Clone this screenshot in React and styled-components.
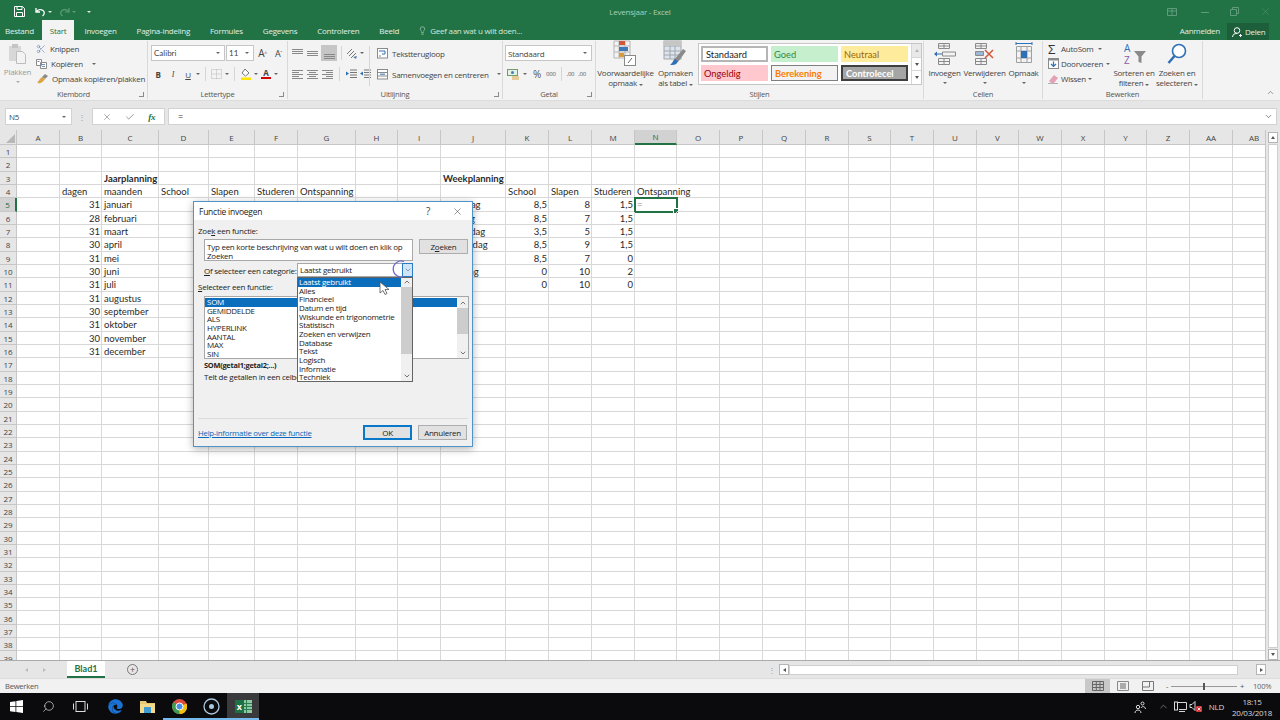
import React from "react";
import styled, { createGlobalStyle } from "styled-components";
import { FaEdge } from "react-icons/fa";
import { Check, ChevronDown, ChevronUp, Lightbulb, Scissors, Search, X } from "lucide-react";

const UI = '"Open Sans", "Noto Sans", sans-serif';
const CELL = 'Lato, "Open Sans", sans-serif';

const Global = createGlobalStyle`
  html, body { margin: 0; padding: 0; background: #fff; }
  #root { width: 1280px; height: 720px; overflow: hidden; }
  * { box-sizing: border-box; }
`;

const Page = styled.div`
  position: relative;
  width: 1280px;
  height: 720px;
  display: flex;
  flex-direction: column;
  overflow: hidden;
  font-family: ${UI};
  font-size: 8px;
  letter-spacing: -0.25px;
  white-space: nowrap;
  color: #444;
`;

/* title bar */
const TitleBar = styled.div`
  height: 20px;
  background: #217346;
  display: grid;
  grid-template-columns: 1fr auto 1fr;
  align-items: center;
  padding-top: 3px;
  color: #a9cfb9;
`;
const Quick = styled.div`
  display: flex;
  align-items: center;
  gap: 5px;
  padding-left: 14px;
  color: #e4efe8;
`;
const WindowButtons = styled.div`
  display: flex;
  justify-content: flex-end;
  align-items: center;
  padding-right: 9px;
  color: #5f9c7c;
`;
const WindowButton = styled.span`
  display: flex;
  margin-right: ${(p) => p.$mr || 0}px;
`;
const DocTitle = styled.div`
  font-size: 8px;
`;

/* tabs */
const TabRow = styled.div`
  height: 20px;
  background: #217346;
  display: flex;
  align-items: stretch;
  color: #e3efe8;
`;
const Tab = styled.div`
  display: flex;
  align-items: center;
  padding: 1px 10px 0;
  background: transparent;
  color: inherit;
`;
const FileTab = styled(Tab)`
  padding: 1px 8px 0 5px;
`;
const ActiveTab = styled(Tab)`
  padding: 1px 8px 0;
  background: #f3f3f3;
  color: #217346;
`;
const TellMe = styled.div`
  display: flex;
  align-items: center;
  gap: 3px;
  padding: 1px 0 0 9px;
  color: #d6e8dd;
`;
const TabSpacer = styled.div`
  flex: 1;
`;
const SignIn = styled.div`
  display: flex;
  align-items: center;
  padding-top: 1px;
  margin-right: 7px;
`;
const ShareBox = styled.div`
  display: flex;
  align-items: center;
  gap: 3px;
  width: 42px;
  margin: 3px 11px 0 0;
  padding-left: 5px;
  background: #1c5f3a;
`;

/* ribbon */
const Ribbon = styled.div`
  position: relative;
  height: 61px;
  background: #f3f3f3;
  display: flex;
  border-bottom: 1px solid #dcdcdc;
`;
const Group = styled.div`
  width: ${(p) => p.$w}px;
  display: flex;
  flex-direction: column;
  border-right: 1px solid #d9d9d9;
  margin: 1px 0;
  position: relative;
`;
const GroupBody = styled.div`
  flex: 1;
  display: flex;
  padding-left: ${(p) => p.$pl || 0}px;
  gap: ${(p) => p.$gap || 0}px;
  min-height: 0;
`;
const GroupLabel = styled.div`
  height: 11px;
  text-align: center;
  line-height: 12px;
  color: #555;
  font-size: 7.6px;
`;
const Launcher = styled.span`
  position: absolute;
  right: 3px;
  bottom: 2px;
  width: 5px;
  height: 5px;
  border-left: 1px solid #8a8a8a;
  border-bottom: 1px solid #8a8a8a;
  transform: scaleX(-1);
`;
const Column = styled.div`
  display: flex;
  flex-direction: column;
  align-items: ${(p) => p.$align || "stretch"};
  gap: ${(p) => p.$gap || 0}px;
  width: ${(p) => (p.$w ? `${p.$w}px` : "auto")};
  padding-left: ${(p) => p.$pl || 0}px;
`;
const Row = styled.div`
  display: flex;
  align-items: center;
  gap: ${(p) => p.$gap ?? 4}px;
  height: ${(p) => p.$h || 15}px;
  margin-top: ${(p) => p.$mt || 0}px;
  margin-left: ${(p) => p.$ml || 0}px;
  padding-left: ${(p) => p.$pl || 0}px;
`;
const Caret = styled.span`
  display: inline-block;
  width: 0;
  height: 0;
  flex: none;
  border-left: 2px solid transparent;
  border-right: 2px solid transparent;
  border-top: 2px solid ${(p) => p.$c || "#666"};
  margin-left: ${(p) => p.$ml || 0}px;
  margin-top: ${(p) => p.$mt || 0}px;
`;
const Muted = styled.span`
  color: #9a9a9a;
`;
const BigButton = styled.div`
  width: ${(p) => p.$w}px;
  margin-left: ${(p) => p.$ml || 0}px;
  display: flex;
  flex-direction: column;
  align-items: center;
  line-height: 10px;
  text-align: center;
`;
const BigIcon = styled.div`
  height: ${(p) => p.$h || 26}px;
  display: flex;
  align-items: center;
  justify-content: center;
  margin-bottom: 1px;
`;
const Select = styled.div`
  width: ${(p) => p.$w}px;
  height: 16px;
  background: #fff;
  border: 1px solid #c6c6c6;
  display: flex;
  align-items: center;
  justify-content: space-between;
  padding: 0 4px 0 2px;
  font-size: 8px;
  color: #444;
`;
const FontSelect = styled(Select)`
  font-family: ${CELL};
  letter-spacing: 0;
`;
const GlyphButton = styled.span`
  width: ${(p) => p.$w || 14}px;
  height: 16px;
  flex: none;
  display: flex;
  align-items: center;
  justify-content: center;
  color: #444;
  font-family: ${(p) => (p.$serif ? '"Liberation Serif", serif' : UI)};
  font-weight: ${(p) => (p.$bold ? 700 : 400)};
  font-style: ${(p) => (p.$italic ? "italic" : "normal")};
  text-decoration: ${(p) => (p.$under ? "underline" : "none")};
  background: ${(p) => (p.$on ? "#c6c6c6" : "transparent")};
  font-size: ${(p) => p.$size || 8}px;
`;
const Tiny = styled.sup`
  font-size: 5px;
`;
const RibbonSep = styled.span`
  width: 1px;
  height: ${(p) => p.$h || 14}px;
  background: #d6d6d6;
  flex: none;
  margin: ${(p) => p.$mt || 0}px ${(p) => p.$m ?? 3}px 0;
`;
const ColorBar = styled.span`
  display: flex;
  flex-direction: column;
  align-items: center;
  line-height: 8px;
  font-weight: 700;
  color: #444;
  &::after {
    content: "";
    width: 10px;
    height: 2px;
    background: ${(p) => p.$c};
  }
`;
const Gallery = styled.div`
  width: 224px;
  height: 42px;
  margin: 2px 0 0 2px;
  background: #fff;
  border: 1px solid #c6c6c6;
  display: flex;
`;
const StyleGrid = styled.div`
  flex: 1;
  display: grid;
  grid-template-columns: repeat(3, 67px);
  grid-template-rows: repeat(2, 16px);
  gap: 3px;
  padding: 2px 0 0 2px;
`;
const StyleCell = styled.div`
  display: flex;
  align-items: center;
  padding-left: 3px;
  font-family: ${CELL};
  font-size: 9.3px;
  letter-spacing: 0;
  background: ${(p) => p.$bg};
  color: ${(p) => p.$c};
  font-weight: ${(p) => (p.$bold ? 700 : 400)};
  border: ${(p) => p.$border || "none"};
  overflow: hidden;
`;
const GalleryScroll = styled.div`
  width: 10px;
  display: flex;
  flex-direction: column;
  border-left: 1px solid #d6d6d6;
`;
const GalleryButton = styled.div`
  flex: 1;
  display: flex;
  align-items: center;
  justify-content: center;
  background: ${(p) => (p.$off ? "#e9e9e9" : "#fff")};
  border-bottom: 1px solid #d6d6d6;
  &:last-child {
    border-bottom: none;
  }
`;
const Collapse = styled.div`
  position: absolute;
  right: 5px;
  bottom: 1px;
  color: #555;
`;
const SumSign = styled.span`
  width: 12px;
  font-size: 13px;
  line-height: 12px;
  color: #333;
`;
const Ghost = styled.span`
  font-size: ${(p) => p.$s || 7}px;
  margin-left: ${(p) => p.$ml || 0}px;
  color: #555;
`;

/* formula bar */
const FormulaBar = styled.div`
  height: 29px;
  background: #e6e6e6;
  display: flex;
  padding: 7px 3px 5px 5px;
  gap: 3px;
`;
const NameBox = styled.div`
  width: 67px;
  background: #fff;
  border: 1px solid #d2d2d2;
  display: flex;
  align-items: center;
  justify-content: space-between;
  padding: 0 5px 0 3px;
  font-size: 8px;
`;
const Dots = styled.div`
  width: 10px;
  margin: 0 2px;
  display: flex;
  align-items: center;
  justify-content: center;
  color: #9a9a9a;
`;
const FormulaButtons = styled.div`
  width: 73px;
  background: #fff;
  border: 1px solid #d2d2d2;
  display: flex;
  align-items: center;
  justify-content: space-around;
  padding: 0 2px;
  color: #666;
`;
const Fx = styled.span`
  font-family: "Liberation Serif", serif;
  font-style: italic;
  font-size: 9px;
  font-weight: 700;
  color: #217346;
`;
const FormulaInput = styled.div`
  flex: 1;
  background: #fff;
  border: 1px solid #d2d2d2;
  display: flex;
  align-items: center;
  justify-content: space-between;
  padding: 0 3px 0 9px;
  font-family: ${CELL};
  font-size: 9px;
  color: #333;
`;

/* sheet */
const SheetRow = styled.div`
  flex: 1;
  min-height: 0;
  display: flex;
  background: #e6e6e6;
`;
const SheetGrid = styled.div`
  width: 1266px;
  flex: none;
  overflow: hidden;
  display: grid;
  align-content: start;
  background: #fff;
  border-right: 1px solid #c6c6c6;
  grid-template-columns: ${(p) => p.$columns};
  grid-template-rows: 15px repeat(39, 13.333px);
  font-family: ${CELL};
  font-size: 9.5px;
  letter-spacing: 0;
  color: #2a2a2a;
`;
const Corner = styled.div`
  background: #e6e6e6;
  border-right: 1px solid #c6c6c6;
  border-bottom: 1px solid #c6c6c6;
  position: relative;
  &::after {
    content: "";
    position: absolute;
    right: 1px;
    bottom: 1px;
    border-left: 9px solid transparent;
    border-bottom: 9px solid #b8b8b8;
  }
`;
const ColumnHead = styled.div`
  display: flex;
  align-items: center;
  justify-content: center;
  background: ${(p) => (p.$active ? "#d2d2d2" : "#e6e6e6")};
  border-right: 1px solid #c6c6c6;
  border-bottom: ${(p) => (p.$active ? "2px solid #217346" : "1px solid #c6c6c6")};
  color: ${(p) => (p.$active ? "#1f6b41" : "#444")};
  font-family: ${UI};
  font-size: 8px;
`;
const RowHead = styled.div`
  display: flex;
  align-items: center;
  justify-content: center;
  padding-top: 1px;
  background: ${(p) => (p.$active ? "#d2d2d2" : "#e6e6e6")};
  border-right: ${(p) => (p.$active ? "2px solid #217346" : "1px solid #c6c6c6")};
  border-bottom: 1px solid #c6c6c6;
  color: ${(p) => (p.$active ? "#1f6b41" : "#444")};
  font-family: ${UI};
  font-size: 8px;
`;
const Cell = styled.div`
  position: relative;
  grid-column: ${(p) => (p.$span ? `span ${p.$span}` : "auto")};
  border-right: 1px solid #d8d8d8;
  border-bottom: 1px solid #d8d8d8;
  display: flex;
  align-items: center;
  justify-content: ${(p) => (p.$right ? "flex-end" : "flex-start")};
  padding: 1px 1px 0 2px;
  font-weight: ${(p) => (p.$bold ? 700 : 400)};
`;
const ActiveCell = styled(Cell)`
  outline: 2px solid #217346;
  outline-offset: -1px;
  color: #8a8a8a;
  &::after {
    content: "";
    position: absolute;
    right: -3px;
    bottom: -3px;
    width: 4px;
    height: 4px;
    background: #217346;
    border: 1px solid #fff;
  }
`;
const VScroll = styled.div`
  flex: 1;
  display: flex;
  flex-direction: column;
  padding: 2px 2px 0 2px;
`;
const ScrollButton = styled.div`
  height: ${(p) => p.$h || 11}px;
  width: ${(p) => p.$w || 10}px;
  flex: none;
  background: #fff;
  border: 1px solid #b5b5b5;
  display: flex;
  align-items: center;
  justify-content: center;
`;
const VThumb = styled.div`
  flex: 1;
  margin: 1px 0;
  background: #fff;
  border: 1px solid #cfcfcf;
`;
const ArrowUp = styled.span`
  border-left: 2px solid transparent;
  border-right: 2px solid transparent;
  border-bottom: 3px solid ${(p) => p.$c || "#555"};
`;
const ArrowDown = styled.span`
  border-left: 2px solid transparent;
  border-right: 2px solid transparent;
  border-top: 3px solid #555;
`;
const ArrowLeft = styled.span`
  border-top: 2px solid transparent;
  border-bottom: 2px solid transparent;
  border-right: 3px solid ${(p) => p.$c || "#555"};
`;
const ArrowRight = styled.span`
  border-top: 2px solid transparent;
  border-bottom: 2px solid transparent;
  border-left: 3px solid ${(p) => p.$c || "#555"};
`;

/* sheet tabs + status */
const SheetTabs = styled.div`
  height: 18px;
  background: #e6e6e6;
  border-top: 1px solid #ababab;
  display: flex;
  align-items: stretch;
`;
const TabNav = styled.div`
  width: 67px;
  display: flex;
  align-items: center;
  justify-content: center;
  gap: 15px;
  padding-left: 3px;
`;
const SheetTab = styled.div`
  width: 38px;
  background: #fff;
  border-bottom: 2px solid #217346;
  display: flex;
  align-items: center;
  justify-content: center;
  font-family: ${CELL};
  font-size: 9px;
  letter-spacing: 0;
  font-weight: 700;
  color: #217346;
`;
const AddSheet = styled.div`
  width: 11px;
  height: 11px;
  margin: 3px 0 0 22px;
  border: 1px solid #777;
  border-radius: 50%;
  display: flex;
  align-items: center;
  justify-content: center;
  font-size: 9px;
  line-height: 1;
  color: #555;
`;
const SplitDots = styled.div`
  margin-left: auto;
  width: 11px;
  display: flex;
  align-items: center;
  color: #9a9a9a;
  font-size: 8px;
`;
const HScroll = styled.div`
  width: 487px;
  display: flex;
  align-items: center;
  margin-right: 14px;
`;
const HThumb = styled.div`
  width: 449px;
  height: 10px;
  flex: none;
  background: #fff;
  border: 1px solid #cfcfcf;
`;
const HTrack = styled.div`
  flex: 1;
`;
const StatusBar = styled.div`
  height: 15px;
  background: #f1f1f1;
  border-top: 1px solid #dcdcdc;
  display: flex;
  align-items: center;
  padding-left: 5px;
  font-size: 7.6px;
  color: #555;
`;
const ViewButtons = styled.div`
  margin-left: auto;
  display: flex;
  align-items: stretch;
  height: 100%;
`;
const ViewButton = styled.div`
  width: 25px;
  display: flex;
  align-items: center;
  justify-content: center;
  background: ${(p) => (p.$on ? "#c8c8c8" : "transparent")};
  color: #666;
`;
const ZoomBox = styled.div`
  width: 78px;
  margin-left: 6px;
  display: flex;
  align-items: center;
  gap: 3px;
  color: #555;
`;
const ZoomTrack = styled.div`
  position: relative;
  flex: 1;
  height: 1px;
  background: #9a9a9a;
`;
const ZoomThumb = styled.span`
  position: absolute;
  left: 32px;
  top: -3px;
  width: 2px;
  height: 7px;
  background: #555;
`;
const ZoomPct = styled.div`
  width: 36px;
  padding-left: 9px;
  color: #666;
`;

/* taskbar */
const Taskbar = styled.div`
  height: 27px;
  background: #0b0b0e;
  display: flex;
  align-items: stretch;
  color: #e8e8e8;
`;
const TaskSlot = styled.div`
  width: 32px;
  margin-left: ${(p) => p.$ml || 0}px;
  display: flex;
  align-items: center;
  justify-content: center;
  background: ${(p) => (p.$on ? "#3a3a3c" : "transparent")};
  border-bottom: 2px solid ${(p) => (p.$open ? "#76b9ed" : "transparent")};
  border-top: 2px solid transparent;
`;
const MirroredSearch = styled(Search)`
  transform: scaleX(-1);
`;
const Tray = styled.div`
  margin-left: auto;
  display: flex;
  align-items: center;
  color: #d8d8d8;
  padding-right: 6px;
`;
const TrayIcon = styled.div`
  margin-right: ${(p) => p.$mr || 8}px;
  display: flex;
  align-items: center;
`;
const Clock = styled.div`
  width: 44px;
  text-align: center;
  line-height: 11px;
  font-size: 8px;
  color: #d8d8d8;
`;

/* dialog */
const Dialog = styled.div`
  position: absolute;
  left: 193px;
  top: 201px;
  width: 280px;
  height: 246px;
  background: #f0f0f0;
  border: 1px solid #4f94c9;
  box-shadow: 0 2px 8px rgba(0, 0, 0, 0.3);
  display: flex;
  flex-direction: column;
  color: #222;
`;
const DialogTitle = styled.div`
  height: 18px;
  background: #fff;
  display: flex;
  align-items: center;
  padding: 0 9px 0 5px;
  font-size: 8.5px;
  color: #222;
`;
const TitleButtons = styled.div`
  margin-left: auto;
  display: flex;
  align-items: center;
  gap: 22px;
  font-size: 10px;
  color: #444;
`;
const DialogLabel = styled.div`
  height: 10px;
  line-height: 10px;
  margin: ${(p) => p.$mt || 0}px 0 0 ${(p) => p.$ml ?? 4}px;
`;
const SearchRow = styled.div`
  display: flex;
  gap: 6px;
  margin: 3px 0 0 10px;
`;
const SearchBox = styled.div`
  width: 209px;
  height: 22px;
  background: #fff;
  border: 1px solid #a8a8a8;
  padding: 2px 2px 0;
  line-height: 9px;
  white-space: normal;
`;
const DialogButton = styled.div`
  width: 49px;
  height: 15px;
  background: #e1e1e1;
  border: ${(p) => (p.$primary ? "2px solid #0a78c8" : "1px solid #adadad")};
  display: flex;
  align-items: center;
  justify-content: center;
  color: #222;
  flex: none;
`;
const CategoryRow = styled.div`
  display: flex;
  align-items: center;
  height: 14px;
  margin: 2px 0 0 10px;
`;
const CategoryLabel = styled.div`
  width: 93px;
`;
const Combo = styled.div`
  width: 116px;
  height: 14px;
  background: #fff;
  border: 1px solid #a8a8a8;
  display: flex;
  align-items: center;
  justify-content: space-between;
  padding: 0 0 1px 2px;
`;
const ComboButton = styled.div`
  width: 11px;
  height: 14px;
  margin: 0 -1px -1px 0;
  background: #cfe4f5;
  border: 1px solid #2b7cc4;
  display: flex;
  align-items: center;
  justify-content: center;
  color: #3d5a78;
`;
const FunctionList = styled.div`
  width: 265px;
  height: 63px;
  margin: 4px 0 0 10px;
  background: #fff;
  border: 1px solid #a8a8a8;
  display: flex;
  padding: 1px 0 0;
`;
const ListItems = styled.div`
  flex: 1;
`;
const ListItem = styled.div`
  height: 8.67px;
  line-height: 8.67px;
  padding-left: ${(p) => p.$pl ?? 2}px;
  background: ${(p) => (p.$on ? "#0a6ebd" : "transparent")};
  color: ${(p) => (p.$on ? "#fff" : "#222")};
`;
const ListScroll = styled.div`
  width: 11px;
  flex: none;
  margin-top: -1px;
  display: flex;
  flex-direction: column;
  align-items: center;
  background: #f0f0f0;
`;
const ListArrow = styled.div`
  height: ${(p) => p.$h || 11}px;
  width: 100%;
  flex: none;
  display: flex;
  align-items: center;
  justify-content: center;
  color: #333;
`;
const ListThumb = styled.div`
  width: 100%;
  height: ${(p) => p.$h}px;
  flex: none;
  background: #cdcdcd;
`;
const ScrollGap = styled.div`
  flex: 1;
`;
const Signature = styled.div`
  height: 10px;
  line-height: 10px;
  margin: 1px 0 0 10px;
  font-weight: 700;
  font-size: 7.4px;
`;
const Description = styled.div`
  height: 10px;
  line-height: 10px;
  margin: 2px 0 0 10px;
`;
const DialogRule = styled.div`
  height: 1px;
  background: #dcdcdc;
  margin: auto 4px 0;
`;
const DialogFooter = styled.div`
  height: 27px;
  display: flex;
  align-items: center;
  gap: 6px;
  padding: 0 5px 0 4px;
`;
const HelpLink = styled.span`
  margin-right: auto;
  color: #0a66b8;
  text-decoration: underline;
  font-size: 7.8px;
`;
const Dropdown = styled.div`
  position: absolute;
  left: 103px;
  top: 75px;
  width: 116px;
  height: 105px;
  background: #fff;
  border: 1px solid #646464;
  display: flex;
  overflow: hidden;
`;
const DropList = styled.div`
  flex: 1;
`;
const CursorRing = styled.svg`
  position: absolute;
  left: 197px;
  top: 57px;
`;
const Pointer = styled.svg`
  position: absolute;
  left: 185px;
  top: 79px;
`;
const IconSvg = styled.svg`
  display: block;
  flex: none;
`;

/* data */
const COLUMNS = [
  ["A", 43], ["B", 42], ["C", 57], ["D", 50], ["E", 46], ["F", 43], ["G", 58], ["H", 42], ["I", 43],
  ["J", 65], ["K", 43], ["L", 43], ["M", 43], ["N", 42], ["O", 43], ["P", 43], ["Q", 43], ["R", 43],
  ["S", 42], ["T", 43], ["U", 43], ["V", 42], ["W", 43], ["X", 43], ["Y", 42], ["Z", 43], ["AA", 43], ["AB", 43],
];
const CELLS = {
  C3: { t: "Jaarplanning", bold: true }, J3: { t: "Weekplanning", bold: true },
  B4: { t: "dagen" }, C4: { t: "maanden" }, D4: { t: "School" }, E4: { t: "Slapen" }, F4: { t: "Studeren" }, G4: { t: "Ontspanning" },
  K4: { t: "School" }, L4: { t: "Slapen" }, M4: { t: "Studeren" }, N4: { t: "Ontspanning", span: 2 },
  J5: { t: "maandag" }, J6: { t: "dinsdag" }, J7: { t: "woensdag" }, J8: { t: "donderdag" }, J9: { t: "vrijdag" }, J10: { t: "zaterdag" }, J11: { t: "zondag" },
};
[[31, "januari"], [28, "februari"], [31, "maart"], [30, "april"], [31, "mei"], [30, "juni"], [31, "juli"], [31, "augustus"], [30, "september"], [31, "oktober"], [30, "november"], [31, "december"]].forEach(([d, m], i) => {
  CELLS[`B${i + 5}`] = { t: d, right: true };
  CELLS[`C${i + 5}`] = { t: m };
});
[["8,5", 8, "1,5"], ["8,5", 7, "1,5"], ["3,5", 5, "1,5"], ["8,5", 9, "1,5"], ["8,5", 7, 0], [0, 10, 2], [0, 10, 0]].forEach((r, i) => {
  ["K", "L", "M"].forEach((c, j) => {
    CELLS[`${c}${i + 5}`] = { t: r[j], right: true };
  });
});

const FUNCTIONS = ["SOM", "GEMIDDELDE", "ALS", "HYPERLINK", "AANTAL", "MAX", "SIN"];
const CATEGORIES = ["Laatst gebruikt", "Alles", "Financieel", "Datum en tijd", "Wiskunde en trigonometrie", "Statistisch", "Zoeken en verwijzen", "Database", "Tekst", "Logisch", "Informatie", "Techniek"];

/* drawn icons */
const Svg = ({ w = 12, h = 12, children }) => (
  <IconSvg width={w} height={h} viewBox={`0 0 ${w} ${h}`} fill="none">
    {children}
  </IconSvg>
);
const SaveIcon = () => (
  <Svg w={11} h={11}>
    <path d="M.5.5h8l2 2v8H.5z" stroke="#fff" />
    <path d="M3 .5v3h5v-3M2.500 10.500V6.500h6v4" stroke="#fff" />
  </Svg>
);
const UndoIcon = ({ c = "#fff" }) => (
  <Svg w={11} h={10}>
    <path d="M1 1v4h4" stroke={c} strokeWidth="1.3" />
    <path d="M1.500 4.500C3 2.500 6 2 8 3.500s1.500 4-.5 5.500" stroke={c} strokeWidth="1.3" />
  </Svg>
);
const RedoIcon = () => (
  <Svg w={11} h={10}>
    <path d="M10 1v4H6" stroke="#5f9c7c" strokeWidth="1.2" />
    <path d="M9.500 4.500C8 2.500 5 2 3 3.500s-1.500 4 .5 5.500" stroke="#5f9c7c" strokeWidth="1.200" />
  </Svg>
);
const PasteIcon = () => (
  <Svg w={20} h={22}>
    <rect x="1" y="3" width="12" height="15" fill="#d8d8d8" />
    <rect x="4" y="1" width="6" height="4" fill="#c4c4c4" />
    <path d="M8.500 8.500h6l3 3v9h-9z" fill="#f3f3f3" stroke="#bdbdbd" />
  </Svg>
);
const CopyIcon = () => (
  <Svg w={11} h={10}>
    <path d="M.5.500h5v6h-5zM4.500 3.500h6v6h-6z" fill="#fff" stroke="#8a8a8a" />
    <path d="M6 5.500h3M6 7.500h3M1.500 2.500h2" stroke="#6f8fb5" />
  </Svg>
);
const BrushIcon = () => (
  <Svg w={12} h={10}>
    <path d="M6 3l3-3 3 2-3 3z" fill="#8a8a8a" />
    <path d="M1 8c2 0 2-3 5-5l3 2c-2 3-4 4-6 4.500z" fill="#d9a441" />
  </Svg>
);
const Lines = ({ rows, w = 13, h = 11, c = "#888" }) => (
  <Svg w={w} h={h}>
    {rows.map(([x1, x2, y]) => (
      <path key={`${y}-${x1}`} d={`M${x1} ${y + 0.5}H${x2}`} stroke={c} />
    ))}
  </Svg>
);
const AlignV = ({ top }) => (
  <Lines rows={[[1, 12, top], [1, 12, top + 2], [1, 12, top + 4]]} />
);
const AlignH = ({ mode }) => {
  const x = (w) => (mode === "l" ? [1, 1 + w] : mode === "r" ? [12 - w, 12] : [6.5 - w / 2, 6.5 + w / 2]);
  return <Lines rows={[[...x(11), 1], [...x(7), 3], [...x(11), 5], [...x(7), 7], [...x(11), 9]]} />;
};
const Orientation = () => (
  <Svg w={12} h={11}>
    <path d="M1 6l5-5M3 8l5-5M5 10l5-5" stroke="#777" />
    <path d="M7 9l4-1-1 3z" fill="#5a7fb0" />
  </Svg>
);
const IndentIcon = ({ flip }) => (
  <Svg w={12} h={10}>
    <path d="M5 1h7M5 3.500h7M5 6h7M5 8.500h7" stroke="#777" />
    <path d={flip ? "M4 2.500v4l-3-2z" : "M1 2.500v4l3-2z"} fill="#2f6fb5" />
  </Svg>
);
const BorderIcon = () => (
  <Svg w={12} h={11}>
    <path d="M.5.500h10v9H.5zM5.500.500v9M.5 5h10" stroke="#b8b8b8" strokeDasharray="1 1" />
  </Svg>
);
const FillIcon = () => (
  <Svg w={12} h={12}>
    <path d="M5 1l4 4-3.500 3L2 5z" fill="#fff" stroke="#777" />
    <rect x="1" y="9.500" width="10" height="2.500" fill="#ffe600" />
  </Svg>
);
const WrapIcon = () => (
  <Svg w={12} h={11}>
    <rect x=".5" y=".5" width="10" height="9.500" stroke="#8a8a8a" fill="#fff" />
    <path d="M2 3h6v3H5" stroke="#2f6fb5" />
    <path d="M2 8h2" stroke="#8a8a8a" />
  </Svg>
);
const MergeIcon = () => (
  <Svg w={12} h={11}>
    <rect x=".5" y=".5" width="10" height="9.500" stroke="#8a8a8a" fill="#fff" />
    <path d="M.5 3.500h10M.5 7h10" stroke="#8a8a8a" />
    <path d="M3 5.200h5" stroke="#2f6fb5" />
  </Svg>
);
const CurrencyIcon = () => (
  <Svg w={13} h={11}>
    <rect x=".5" y=".5" width="10" height="6" fill="#e6f0e4" stroke="#6f9e6a" />
    <circle cx="5.500" cy="3.500" r="1.500" fill="#3f7fbf" />
    <path d="M5 8h7M5 10h7" stroke="#d9a441" />
  </Svg>
);
const CondIcon = () => (
  <Svg w={30} h={28}>
    <path d="M3 1h16v17H3zM8 1v17M14 1v17M3 6h16M3 12h16" stroke="#b5b5b5" />
    <rect x="8" y="1" width="6" height="4" fill="#d0573a" />
    <rect x="8" y="7" width="9" height="4" fill="#3f79b5" />
    <rect x="8" y="13" width="5" height="4" fill="#d99a3a" />
    <rect x="13.500" y="15.500" width="11" height="10" fill="#fff" stroke="#8a8a8a" />
    <path d="M17 23l4-5" stroke="#666" />
  </Svg>
);
const TableIcon = () => (
  <Svg w={30} h={28}>
    <rect x="3" y="1" width="17" height="18" fill="#dbe5f1" stroke="#a6a6a6" />
    <path d="M3 6h17M3 11h17M3 15h17M9 1v18M14 1v18" stroke="#a6a6a6" />
    <rect x="3" y="1" width="17" height="5" fill="#c6c6c6" />
    <path d="M13 20l9-11 3 2-8 11z" fill="#8a8a8a" />
    <path d="M11 25c3 0 5-1 6-4l-3-2c-2 1-2 4-5 6z" fill="#2f6fb5" />
  </Svg>
);
const CellsInsert = () => (
  <Svg w={24} h={24}>
    <path d="M5.500 1.500h11v5h-11zM5.500 16.500h11v6h-11zM11 1.500v5M11 16.500v6M5.500 19.500h11M5.500 4h11" stroke="#8a8a8a" />
    <path d="M9.500 10h13v4h-13z" stroke="#8a8a8a" />
    <path d="M4 9.500v5l-3-2.500z" fill="#2f6fb5" />
    <path d="M4 12h5" stroke="#2f6fb5" />
  </Svg>
);
const CellsDelete = () => (
  <Svg w={24} h={24}>
    <path d="M2.500 1.500h11v5h-11zM2.500 16.500h11v6h-11zM8 1.500v5M8 16.500v6M2.500 19.500h11M2.500 4h11" stroke="#8a8a8a" />
    <path d="M2.500 9.500h8v4h-8z" fill="#9db7d6" stroke="#8a8a8a" />
    <path d="M12 8l8 8M20 8l-8 8" stroke="#d0573a" strokeWidth="1.500" />
  </Svg>
);
const CellsFormat = () => (
  <Svg w={24} h={24}>
    <path d="M4.500 4.500h15v16h-15zM4.500 9h15M4.500 16h15M9 4.500v16M15 4.500v16" stroke="#a0a0a0" />
    <rect x="9" y="9" width="6" height="7" fill="#2f6fb5" />
    <path d="M4 1.500h16M4 0v3M20 0v3" stroke="#2f6fb5" />
  </Svg>
);
const FillDown = () => (
  <Svg w={11} h={11}>
    <rect x=".5" y=".5" width="10" height="10" fill="#fff" stroke="#8a8a8a" />
    <rect x=".5" y=".5" width="10" height="2" fill="#8a8a8a" />
    <path d="M5.500 3.500v5M3 6l2.500 2.500L8 6" stroke="#2f6fb5" strokeWidth="1.200" />
  </Svg>
);
const Eraser = () => (
  <Svg w={11} h={10}>
    <path d="M6 1l4 3-4 5H3L1 7z" fill="#e4a3b5" />
    <path d="M0 9.500h10" stroke="#b0b0b0" />
  </Svg>
);
const SortIcon = () => (
  <Svg w={30} h={25}>
    <text x="5" y="10" fontFamily="Open Sans" fontSize="10" fill="#2f6fb5">A</text>
    <text x="5" y="22" fontFamily="Open Sans" fontSize="10" fill="#8a5fb0">Z</text>
    <path d="M15 9h12l-4.500 5.500V21l-3-1v-5.500z" fill="#8a8a8a" />
  </Svg>
);
const FindIcon = () => (
  <Svg w={24} h={24}>
    <circle cx="14" cy="9" r="6.500" stroke="#2f6fb5" strokeWidth="1.600" fill="#fff" />
    <path d="M9.500 14L3.500 21" stroke="#2f6fb5" strokeWidth="2.500" />
  </Svg>
);
const WinLogo = () => (
  <Svg w={13} h={13}>
    <path d="M0 2l5.500-.8v5H0zM6.300 1L13 0v6.200H6.300zM0 7h5.500v5L0 11.200zM6.300 7H13v6l-6.700-1z" fill="#fff" />
  </Svg>
);
const TaskView = () => (
  <Svg w={15} h={11}>
    <rect x="3" y=".5" width="9" height="10" stroke="#ddd" />
    <path d="M.5 2.500v6M14.500 2.500v6" stroke="#ddd" />
  </Svg>
);
const FolderIcon = () => (
  <Svg w={15} h={13}>
    <path d="M0 1h6l1 2h8v10H0z" fill="#e8c873" />
    <rect x="0" y="4" width="15" height="9" fill="#f4d98a" />
    <rect x="4" y="7" width="7" height="6" fill="#3f9bd0" />
  </Svg>
);
const ChromeIcon = () => (
  <Svg w={15} h={15}>
    <circle cx="7.500" cy="7.500" r="7.500" fill="#dd4b3e" />
    <path d="M7.500 7.500L1 11.200A7.500 7.500 0 0 1 1.500 3z" fill="#3c9b4e" />
    <path d="M7.500 7.500L1 11.200A7.500 7.500 0 0 0 7.500 15L11 9z" fill="#3c9b4e" />
    <path d="M7.500 7.500L14.500 4.500A7.500 7.500 0 0 1 7.500 15z" fill="#f4c20d" />
    <circle cx="7.500" cy="7.500" r="3.500" fill="#4a8fe7" stroke="#fff" />
  </Svg>
);
const CaptureIcon = () => (
  <Svg w={17} h={17}>
    <circle cx="8.500" cy="8.500" r="7.500" stroke="#a9c7de" strokeWidth="1.300" />
    <circle cx="8.500" cy="8.500" r="2.500" fill="#a9c7de" />
  </Svg>
);
const ExcelIcon = () => (
  <Svg w={17} h={15}>
    <rect x="6" y="1" width="11" height="13" fill="#8fc9a4" />
    <path d="M6 4.500h11M6 7.500h11M6 10.500h11M11.500 1v13" stroke="#2e7d4f" />
    <rect x="0" y="1" width="9" height="13" fill="#1e7145" />
    <text x="1.800" y="11" fontFamily="Open Sans" fontSize="9" fontWeight="700" fill="#fff">x</text>
  </Svg>
);
const People = () => (
  <Svg w={12} h={12}>
    <circle cx="4" cy="6" r="1.700" stroke="#d8d8d8" />
    <path d="M1 12c0-4 6-4 6 0" stroke="#d8d8d8" />
    <circle cx="8.500" cy="2.500" r="1.500" stroke="#d8d8d8" />
    <path d="M7 7c1-2 4-2 4.500 1" stroke="#d8d8d8" />
  </Svg>
);
const Network = () => (
  <Svg w={13} h={11}>
    <path d="M3 1.500h9.500v7H5" stroke="#d8d8d8" />
    <rect x=".5" y="1" width="3" height="8" stroke="#d8d8d8" />
    <path d="M5 10.500h6" stroke="#d8d8d8" />
  </Svg>
);
const Speaker = () => (
  <Svg w={13} h={11}>
    <path d="M1 3.500h2l3-3v9l-3-3H1z" stroke="#d8d8d8" />
    <rect x="7" y="5" width="6" height="6" rx="1" fill="#d03a3a" />
    <path d="M8.500 6.500l3 3M11.500 6.500l-3 3" stroke="#fff" strokeWidth=".8" />
  </Svg>
);
const ViewNormal = () => (
  <Svg w={12} h={10}>
    <path d="M.5.500h11v9H.5zM.5 3.500h11M.5 6.500h11M4.300.500v9M8 .500v9" stroke="#666" />
  </Svg>
);
const ViewLayout = () => (
  <Svg w={12} h={10}>
    <path d="M.5.500h11v9H.5z" stroke="#888" />
    <rect x="3" y="2" width="6" height="6" fill="#aaa" />
  </Svg>
);
const ViewBreak = () => (
  <Svg w={12} h={10}>
    <path d="M.5.500h11v9H.5zM.5 6h7V.5" stroke="#777" />
  </Svg>
);

function Sheet() {
  const columns = `17px ${COLUMNS.map((c) => `${c[1]}px`).join(" ")}`;
  const rows = Array.from({ length: 39 }, (_, i) => i + 1);
  return (
    <SheetGrid $columns={columns}>
      <Corner />
      {COLUMNS.map(([name]) => (
        <ColumnHead key={name} $active={name === "N"}>{name}</ColumnHead>
      ))}
      {rows.map((r) => {
        const cells = [];
        let skip = 0;
        COLUMNS.forEach(([name]) => {
          if (skip > 0) {
            skip -= 1;
            return;
          }
          const key = `${name}${r}`;
          const data = CELLS[key];
          if (key === "N5") {
            cells.push(<ActiveCell key={key}>=</ActiveCell>);
            return;
          }
          if (data && data.span) skip = data.span - 1;
          cells.push(
            <Cell key={key} $right={data && data.right} $bold={data && data.bold} $span={data && data.span}>
              {data ? data.t : null}
            </Cell>
          );
        });
        return (
          <React.Fragment key={r}>
            <RowHead $active={r === 5}>{r}</RowHead>
            {cells}
          </React.Fragment>
        );
      })}
    </SheetGrid>
  );
}

function InsertFunctionDialog() {
  return (
    <Dialog>
      <DialogTitle>
        Functie invoegen
        <TitleButtons>
          <span>?</span>
          <X size={11} strokeWidth={1.2} />
        </TitleButtons>
      </DialogTitle>
      <DialogLabel $mt={6}>Zoe<u>k</u> een functie:</DialogLabel>
      <SearchRow>
        <SearchBox>Typ een korte beschrijving van wat u wilt doen en klik op Zoeken</SearchBox>
        <DialogButton>Z<u>o</u>eken</DialogButton>
      </SearchRow>
      <CategoryRow>
        <CategoryLabel><u>O</u>f selecteer een categorie:</CategoryLabel>
        <Combo>
          Laatst gebruikt
          <ComboButton><ChevronDown size={8} strokeWidth={1.5} /></ComboButton>
        </Combo>
      </CategoryRow>
      <DialogLabel $mt={5}><u>S</u>electeer een functie:</DialogLabel>
      <FunctionList>
        <ListItems>
          {FUNCTIONS.map((f, i) => (
            <ListItem key={f} $on={i === 0}>{f}</ListItem>
          ))}
        </ListItems>
        <ListScroll>
          <ListArrow><ChevronUp size={8} strokeWidth={2} /></ListArrow>
          <ListThumb $h={26} />
          <ScrollGap />
          <ListArrow><ChevronDown size={8} strokeWidth={2} /></ListArrow>
        </ListScroll>
      </FunctionList>
      <Signature>SOM(getal1;getal2;...)</Signature>
      <Description>Telt de getallen in een celbereik op.</Description>
      <DialogRule />
      <DialogFooter>
        <HelpLink>Help-informatie over deze functie</HelpLink>
        <DialogButton $primary>OK</DialogButton>
        <DialogButton>Annuleren</DialogButton>
      </DialogFooter>
      <Dropdown>
        <DropList>
          {CATEGORIES.map((c, i) => (
            <ListItem key={c} $on={i === 0} $pl={1}>{c}</ListItem>
          ))}
        </DropList>
        <ListScroll>
          <ListArrow $h={10}><ChevronUp size={8} strokeWidth={2} /></ListArrow>
          <ListThumb $h={67} />
          <ScrollGap />
          <ListArrow $h={10}><ChevronDown size={8} strokeWidth={2} /></ListArrow>
        </ListScroll>
      </Dropdown>
      <CursorRing width="20" height="22" viewBox="0 0 20 22" fill="none">
        <path d="M13 2.500A8 8 0 1 0 13 17.500" stroke="#6a6ad0" strokeWidth="1.300" />
      </CursorRing>
      <Pointer width="11" height="15" viewBox="0 0 11 15" fill="none">
        <path d="M1 1v11l3-2.500 2 4 2-1-2-4h4z" fill="#fff" stroke="#555" strokeWidth=".8" />
      </Pointer>
    </Dialog>
  );
}

export default function App() {
  return (
    <Page>
      <Global />
      <TitleBar>
        <Quick>
          <SaveIcon />
          <Row $gap={2} $h={11} $ml={5}>
            <UndoIcon />
            <Caret $c="#e4efe8" />
          </Row>
          <Row $gap={2} $h={11} $ml={2}>
            <RedoIcon />
            <Caret $c="#5f9c7c" />
          </Row>
          <Caret $c="#e4efe8" $ml={6} />
        </Quick>
        <DocTitle>Levensjaar - Excel</DocTitle>
        <WindowButtons>
          <WindowButton $mr={23}>
            <Svg w={10} h={8}>
              <path d="M.5.500h9v7h-9zM5 .5v7M.5 3h9" stroke="#5f9c7c" />
            </Svg>
          </WindowButton>
          <WindowButton $mr={20}>
            <Svg w={10} h={8}>
              <path d="M1 4.500h8" stroke="#5f9c7c" />
            </Svg>
          </WindowButton>
          <WindowButton $mr={21}>
            <Svg w={9} h={9}>
              <path d="M.5 2.500h6v6h-6zM2.500 2.500v-2h6v6h-2" stroke="#5f9c7c" />
            </Svg>
          </WindowButton>
          <X size={11} strokeWidth={1} />
        </WindowButtons>
      </TitleBar>
      <TabRow>
        <FileTab>Bestand</FileTab>
        <ActiveTab>Start</ActiveTab>
        <Tab>Invoegen</Tab>
        <Tab>Pagina-indeling</Tab>
        <Tab>Formules</Tab>
        <Tab>Gegevens</Tab>
        <Tab>Controleren</Tab>
        <Tab>Beeld</Tab>
        <TellMe>
          <Lightbulb size={9} strokeWidth={1.4} />
          Geef aan wat u wilt doen...
        </TellMe>
        <TabSpacer />
        <SignIn>Aanmelden</SignIn>
        <ShareBox>
          <Svg w={10} h={10}>
            <circle cx="5" cy="3.500" r="2.800" stroke="#fff" />
            <path d="M.5 10c.5-3 2-3.500 4.500-3.500M7 8.500h3M8.500 7v3" stroke="#fff" />
          </Svg>
          Delen
        </ShareBox>
      </TabRow>
      <Ribbon>
        <Group $w={148}>
          <GroupBody $pl={4} $gap={5}>
            <BigButton $w={27}>
              <BigIcon $h={25}><PasteIcon /></BigIcon>
              <Muted>Plakken</Muted>
              <Caret $c="#aaa" $mt={4} />
            </BigButton>
            <Column>
              <Row><Scissors size={10} color="#5a7fb0" strokeWidth={1.3} /><span>Knippen</span></Row>
              <Row><CopyIcon /><span>Kopiëren</span><Caret $ml={5} /></Row>
              <Row><BrushIcon /><span>Opmaak kopiëren/plakken</span></Row>
            </Column>
          </GroupBody>
          <GroupLabel>Klembord</GroupLabel>
          <Launcher />
        </Group>
        <Group $w={140}>
          <GroupBody $pl={3}>
            <Column $gap={5}>
              <Row $gap={1} $h={16} $mt={4}>
                <FontSelect $w={74}>Calibri<Caret /></FontSelect>
                <FontSelect $w={28}>11<Caret /></FontSelect>
                <GlyphButton $size={10} $w={15}>A<Tiny>^</Tiny></GlyphButton>
                <GlyphButton $size={9} $w={15}>A<Tiny>ˇ</Tiny></GlyphButton>
              </Row>
              <Row $gap={1} $h={16}>
                <GlyphButton $bold $w={14}>B</GlyphButton>
                <GlyphButton $italic $serif $w={14}>I</GlyphButton>
                <GlyphButton $under $w={14}>U</GlyphButton>
                <Caret />
                <RibbonSep $m={4} />
                <BorderIcon />
                <Caret $ml={1} />
                <RibbonSep $m={4} />
                <FillIcon />
                <Caret $ml={1} />
                <GlyphButton $w={14}><ColorBar $c="#d60000">A</ColorBar></GlyphButton>
                <Caret />
              </Row>
            </Column>
          </GroupBody>
          <GroupLabel>Lettertype</GroupLabel>
          <Launcher />
        </Group>
        <Group $w={215}>
          <GroupBody $pl={3}>
            <Column $gap={5} $w={78}>
              <Row $gap={2} $h={16} $mt={4}>
                <AlignV top={1} />
                <AlignV top={3} />
                <GlyphButton $on $w={16}><AlignV top={6} /></GlyphButton>
                <RibbonSep $m={2} />
                <Orientation />
                <Caret />
              </Row>
              <Row $gap={2} $h={16}>
                <AlignH mode="l" />
                <AlignH mode="c" />
                <AlignH mode="r" />
                <RibbonSep $m={3} />
                <IndentIcon />
                <IndentIcon flip />
              </Row>
            </Column>
            <RibbonSep $h={40} $m={0} $mt={5} />
            <Column $gap={5} $pl={7}>
              <Row $h={16} $mt={4} $gap={3}><WrapIcon /><span>Tekstterugloop</span></Row>
              <Row $h={16} $gap={3}><MergeIcon /><span>Samenvoegen en centreren</span><Caret $ml={5} /></Row>
            </Column>
          </GroupBody>
          <GroupLabel>Uitlijning</GroupLabel>
          <Launcher />
        </Group>
        <Group $w={93}>
          <GroupBody $pl={2}>
            <Column $gap={5}>
              <Row $h={16} $mt={4}><Select $w={87}>Standaard<Caret /></Select></Row>
              <Row $h={16} $gap={3} $pl={2}>
                <CurrencyIcon />
                <Caret />
                <Ghost $s={10} $ml={3}>%</Ghost>
                <Ghost $s={6} $ml={2}>000</Ghost>
                <RibbonSep $m={2} />
                <Ghost $s={6}>,00</Ghost>
                <Ghost $s={6} $ml={1}>,00</Ghost>
              </Row>
            </Column>
          </GroupBody>
          <GroupLabel>Getal</GroupLabel>
          <Launcher />
        </Group>
        <Group $w={328}>
          <GroupBody $pl={2}>
            <BigButton $w={55}>
              <BigIcon><CondIcon /></BigIcon>
              Voorwaardelijke
              <span>opmaak <Caret /></span>
            </BigButton>
            <BigButton $w={41} $ml={2}>
              <BigIcon><TableIcon /></BigIcon>
              Opmaken
              <span>als tabel <Caret /></span>
            </BigButton>
            <Gallery>
              <StyleGrid>
                <StyleCell $bg="#fff" $c="#222" $border="2px solid #b5b5b5">Standaard</StyleCell>
                <StyleCell $bg="#c6efce" $c="#2f8a46">Goed</StyleCell>
                <StyleCell $bg="#ffeb9c" $c="#9c6500">Neutraal</StyleCell>
                <StyleCell $bg="#ffc7ce" $c="#9c0006">Ongeldig</StyleCell>
                <StyleCell $bg="#f2f2f2" $c="#fa7d00" $bold $border="1px solid #7f7f7f">Berekening</StyleCell>
                <StyleCell $bg="#a5a5a5" $c="#fff" $bold $border="2px double #3f3f3f">Controlecel</StyleCell>
              </StyleGrid>
              <GalleryScroll>
                <GalleryButton $off><ArrowUp $c="#b5b5b5" /></GalleryButton>
                <GalleryButton><ArrowDown /></GalleryButton>
                <GalleryButton><ArrowDown /></GalleryButton>
              </GalleryScroll>
            </Gallery>
          </GroupBody>
          <GroupLabel>Stijlen</GroupLabel>
        </Group>
        <Group $w={119}>
          <GroupBody $pl={1}>
            <BigButton $w={39}><BigIcon><CellsInsert /></BigIcon>Invoegen<Caret $mt={4} /></BigButton>
            <BigButton $w={41}><BigIcon><CellsDelete /></BigIcon>Verwijderen<Caret $mt={4} /></BigButton>
            <BigButton $w={37}><BigIcon><CellsFormat /></BigIcon>Opmaak<Caret $mt={4} /></BigButton>
          </GroupBody>
          <GroupLabel>Cellen</GroupLabel>
        </Group>
        <Group $w={160}>
          <GroupBody $pl={5}>
            <Column $w={61}>
              <Row $gap={1}><SumSign>Σ</SumSign><span>AutoSom</span><Caret $ml={4} /></Row>
              <Row $gap={2}><FillDown /><span>Doorvoeren</span><Caret $ml={1} /></Row>
              <Row $gap={2}><Eraser /><span>Wissen</span><Caret /></Row>
            </Column>
            <BigButton $w={44} $ml={3}><BigIcon><SortIcon /></BigIcon>Sorteren en<span>filteren <Caret /></span></BigButton>
            <BigButton $w={42}><BigIcon><FindIcon /></BigIcon>Zoeken en<span>selecteren <Caret /></span></BigButton>
          </GroupBody>
          <GroupLabel>Bewerken</GroupLabel>
        </Group>
        <Collapse><ChevronUp size={9} strokeWidth={1.5} /></Collapse>
      </Ribbon>
      <FormulaBar>
        <NameBox>N5<Caret /></NameBox>
        <Dots>⋮</Dots>
        <FormulaButtons>
          <X size={10} strokeWidth={1.2} />
          <Check size={10} strokeWidth={1.6} />
          <Fx>fx</Fx>
        </FormulaButtons>
        <FormulaInput>=<ChevronDown size={9} strokeWidth={1.5} /></FormulaInput>
      </FormulaBar>
      <SheetRow>
        <Sheet />
        <VScroll>
          <ScrollButton><ArrowUp /></ScrollButton>
          <VThumb />
          <ScrollButton><ArrowDown /></ScrollButton>
        </VScroll>
      </SheetRow>
      <SheetTabs>
        <TabNav>
          <ArrowLeft $c="#bdbdbd" />
          <ArrowRight $c="#bdbdbd" />
        </TabNav>
        <SheetTab>Blad1</SheetTab>
        <AddSheet>+</AddSheet>
        <SplitDots>⋮</SplitDots>
        <HScroll>
          <ScrollButton $w={10} $h={11}><ArrowLeft /></ScrollButton>
          <HThumb />
          <HTrack />
          <ScrollButton $w={10} $h={11}><ArrowRight /></ScrollButton>
        </HScroll>
      </SheetTabs>
      <StatusBar>
        Bewerken
        <ViewButtons>
          <ViewButton $on><ViewNormal /></ViewButton>
          <ViewButton><ViewLayout /></ViewButton>
          <ViewButton><ViewBreak /></ViewButton>
        </ViewButtons>
        <ZoomBox>
          <span>-</span>
          <ZoomTrack><ZoomThumb /></ZoomTrack>
          <span>+</span>
        </ZoomBox>
        <ZoomPct>100%</ZoomPct>
      </StatusBar>
      <Taskbar>
        <TaskSlot><WinLogo /></TaskSlot>
        <TaskSlot><MirroredSearch size={13} strokeWidth={1.2} /></TaskSlot>
        <TaskSlot><TaskView /></TaskSlot>
        <TaskSlot $ml={3}><FaEdge size={15} color="#1a72d4" /></TaskSlot>
        <TaskSlot><FolderIcon /></TaskSlot>
        <TaskSlot $open><ChromeIcon /></TaskSlot>
        <TaskSlot $open><CaptureIcon /></TaskSlot>
        <TaskSlot $on $open><ExcelIcon /></TaskSlot>
        <Tray>
          <TrayIcon $mr={12}><People /></TrayIcon>
          <TrayIcon $mr={5}><ChevronUp size={11} strokeWidth={1} /></TrayIcon>
          <TrayIcon $mr={2}><Network /></TrayIcon>
          <TrayIcon $mr={7}><Speaker /></TrayIcon>
          <TrayIcon $mr={6}>NLD</TrayIcon>
          <Clock>18:15<br />20/03/2018</Clock>
        </Tray>
      </Taskbar>
      <InsertFunctionDialog />
    </Page>
  );
}
